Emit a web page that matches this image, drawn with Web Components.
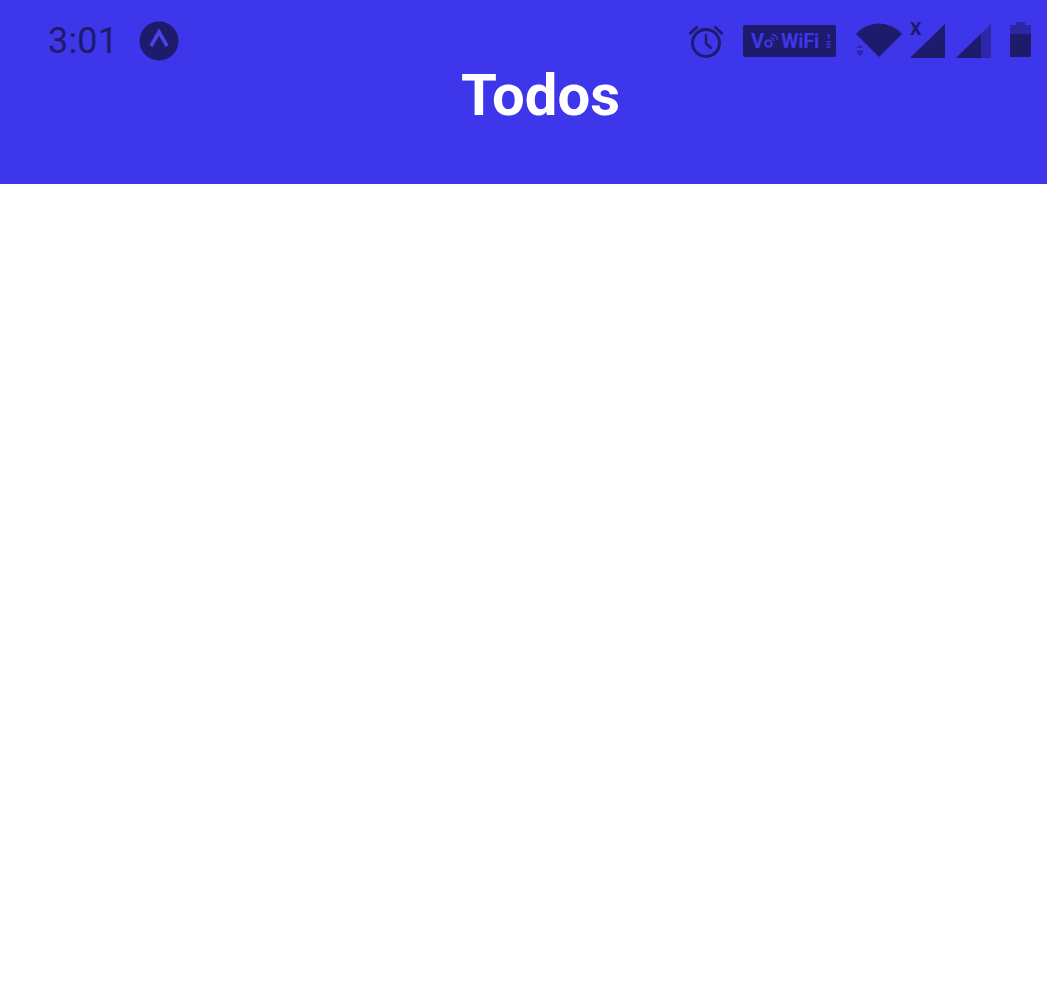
<!DOCTYPE html>
<html lang="en">
<head>
<meta charset="utf-8">
<title>Todos</title>
<style>
  html, body { margin: 0; padding: 0; background: #fff; }
  body { font-family: Roboto, sans-serif; }
</style>
</head>
<body>
<todo-app>
  <app-header slot="header">
    <status-bar slot="status" time="3:01"></status-bar>
    Todos
  </app-header>
</todo-app>

<template id="status-bar-template">
  <style>
    :host {
      display: flex;
      align-items: center;
      height: 62px;
      padding: 20px 16px 0 48px;
      box-sizing: border-box;
      color: #1e1a6c;
    }
    .time {
      font: 400 36px/1 Roboto, sans-serif;
      letter-spacing: 0.2px;
    }
    .left { display: flex; align-items: center; gap: 21px; }
    .right { display: flex; align-items: center; margin-left: auto; }
    svg { display: block; flex: none; }
    .vowifi {
      display: flex;
      align-items: center;
      width: 93px;
      height: 32px;
      margin: 0 19px;
      padding-left: 8px;
      box-sizing: border-box;
      background: #1e1a6c;
      border-radius: 2px;
      color: #3d36ea;
      font: 700 20px/1 Roboto, sans-serif;
      white-space: nowrap;
    }
    .vowifi .fi { margin-left: 3px; letter-spacing: -0.3px; }
    .vowifi .sim {
      display: flex;
      flex-direction: column;
      align-items: center;
      margin-left: 7px;
      font-size: 8px;
      line-height: 7px;
    }
    .vowifi .sim i {
      display: block;
      width: 5px;
      height: 1px;
      margin: 0.5px 0;
      background: #3d36ea;
    }
    .net { position: relative; margin-left: 7px; }
    .net .x {
      position: absolute;
      left: 0;
      top: -4px;
      font: 700 18px/1 Roboto, sans-serif;
    }
  </style>
  <div class="left">
    <span class="time"></span>
    <svg width="40" height="40" viewBox="0 0 40 40">
      <circle cx="20" cy="20" r="19.5" fill="#1e1a6c"/>
      <path d="M12 25 L20 11 L28 25" fill="none" stroke="#4a44ee" stroke-width="3.6"/>
    </svg>
  </div>
  <div class="right">
    <svg width="36" height="36" viewBox="0 0 36 36" fill="none" stroke="#1e1a6c" stroke-width="3">
      <circle cx="18" cy="20" r="13.5"/>
      <path d="M18 11 V20.5 L23.5 25.5" stroke-width="2.4"/>
      <path d="M1.5 11 L9.5 3.5 M34.5 11 L26.5 3.5"/>
    </svg>
    <span class="vowifi">V<svg width="14" height="16" viewBox="0 0 14 16"><circle cx="4.5" cy="10.5" r="3.3" fill="none" stroke="#3d36ea" stroke-width="2"/><path d="M7 5 Q9.5 5 10 8 M8 1.5 Q13 2 13.5 7" fill="none" stroke="#3d36ea" stroke-width="1.3"/></svg><span class="fi">WiFi</span><span class="sim"><span>1</span><i></i><span>2</span></span></span>
    <svg width="48" height="36" viewBox="0 0 48 36">
      <path d="M1 11 A30.4 30.4 0 0 1 47 11 L24 34 Z" fill="#1e1a6c"/>
      <path d="M2 25 Q5 19 8 25 Z M1.5 27.5 H8.5 Q8 31 5 33 Q2 31 1.5 27.5 Z" fill="#2d27a8"/>
    </svg>
    <span class="net">
      <span class="x">X</span>
      <svg width="35" height="34" viewBox="0 0 35 34" style="display:block"><path d="M0 34 L35 0 V34 Z" fill="#1e1a6c"/></svg>
    </span>
    <svg width="35" height="34" viewBox="0 0 35 34" style="margin-left:11px">
      <path d="M0 34 L35 0 V34 Z" fill="#2d27a8"/>
      <path d="M0 34 L25 9.7 V34 Z" fill="#1e1a6c"/>
    </svg>
    <svg width="21" height="35" viewBox="0 0 21 35" style="margin:0 0 3px 19px">
      <path d="M6 0 H15 V3 H21 V12 H0 V3 H6 Z" fill="#2d27a8"/>
      <path d="M0 12 H21 V34 Q21 35 20 35 H1 Q0 35 0 34 Z" fill="#1e1a6c"/>
    </svg>
  </div>
</template>

<script>
class TodoApp extends HTMLElement {
  constructor() {
    super();
    this.shadowDOM = this.attachShadow({ mode: "open" });
    this.shadowDOM.innerHTML = `
      <style>
        :host { display: block; min-height: 986px; background: #fff; }
      </style>
      <slot name="header"></slot>
      <slot></slot>
    `;
  }
}

class AppHeader extends HTMLElement {
  constructor() {
    super();
    this.shadowDOM = this.attachShadow({ mode: "open" });
    this.shadowDOM.innerHTML = `
      <style>
        :host {
          display: block;
          height: 184px;
          background: #3d36ea;
          box-sizing: border-box;
        }
        h1 {
          margin: 0;
          padding-left: 34px;
          color: #fff;
          font: 700 58px/66px Roboto, sans-serif;
          text-align: center;
        }
      </style>
      <slot name="status"></slot>
      <h1><slot></slot></h1>
    `;
  }
}

class StatusBar extends HTMLElement {
  constructor() {
    super();
    this.shadowDOM = this.attachShadow({ mode: "open" });
    const tpl = document.getElementById("status-bar-template");
    this.shadowDOM.appendChild(tpl.content.cloneNode(true));
    this.shadowDOM.querySelector(".time").textContent = this.getAttribute("time");
  }
}

customElements.define("todo-app", TodoApp);
customElements.define("app-header", AppHeader);
customElements.define("status-bar", StatusBar);
</script>
</body>
</html>
